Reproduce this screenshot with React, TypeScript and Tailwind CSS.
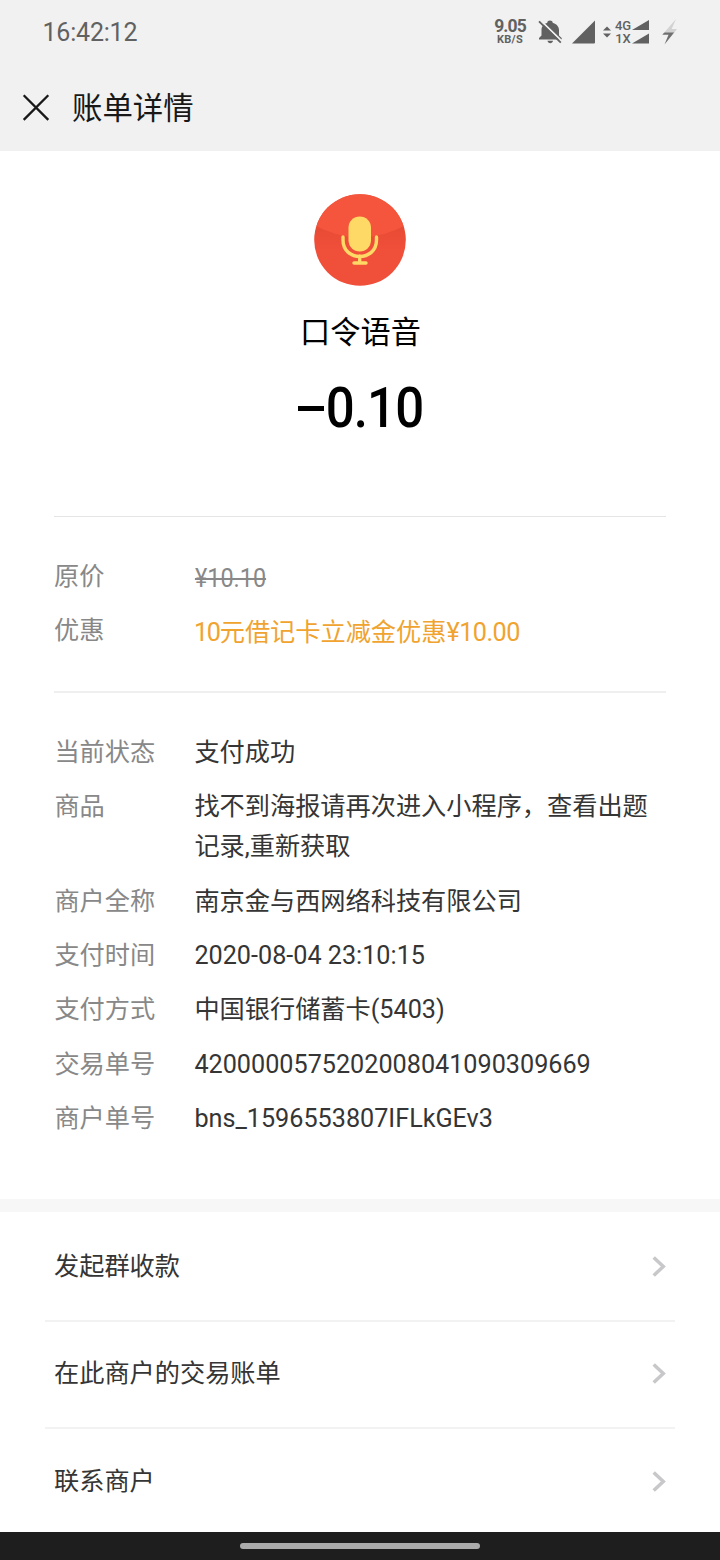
import type { ReactNode } from "react";

const details = [
  { label: "当前状态", value: "支付成功" },
  { label: "商品", value: "找不到海报请再次进入小程序，查看出题记录,重新获取" },
  { label: "商户全称", value: "南京金与西网络科技有限公司" },
  { label: "支付时间", value: "2020-08-04 23:10:15" },
  { label: "支付方式", value: "中国银行储蓄卡(5403)" },
  { label: "交易单号", value: "4200000575202008041090309669" },
  { label: "商户单号", value: "bns_1596553807IFLkGEv3" },
];

const actions = ["发起群收款", "在此商户的交易账单", "联系商户"];

function StatusBar() {
  return (
    <div className="flex h-16 items-center justify-between pr-[42px] pl-[42.5px] text-[#616161]">
      <span className="pt-0.5 text-[25px] leading-8 tracking-[-0.2px]">16:42:12</span>
      <div className="flex items-center">
        <div className="flex w-8 flex-col items-center font-bold">
          <span className="text-[17.5px] leading-[14px] tracking-[-0.9px]">9.05</span>
          <span className="text-[11px] leading-[13px] tracking-[0.3px]">KB/S</span>
        </div>
        <svg className="ml-3 h-6 w-6" viewBox="0 0 24 24" fill="currentColor">
          <path d="M1 19.500v-1.500l2.500-2.500V10c0-3.600 2.200-6.400 5.700-7.100C9.400-.2 14.600-.2 14.800 2.900 18.300 3.600 21 6.400 21 10v5.500l2.700 2.500v1.500z" />
          <path d="M9.500 20.800h5.500c-.3 3.200-5.200 3.200-5.500 0z" />
          <path d="M2-.2 24 21.300" stroke="#f1f1f1" strokeWidth="1.700" />
          <path d="M1 1.300 22.800 22.600" stroke="currentColor" strokeWidth="1.800" />
        </svg>
        <svg className="ml-[10px] h-6 w-6" viewBox="0 0 24 24" fill="currentColor">
          <path d="M0 23.500 23 .5v22q0 1-1 1z" />
        </svg>
        <svg className="ml-[7px] h-3 w-2" viewBox="0 0 8 12" fill="currentColor">
          <path d="M0 4.500 4 .5l4 4zM0 7.500h8l-4 4z" />
        </svg>
        <div className="ml-[3px] flex w-[18px] flex-col items-center text-[13px] leading-[13px] font-medium">
          <span>4G</span>
          <span>1X</span>
        </div>
        <svg className="h-6 w-[17px]" viewBox="0 0 17 24" fill="currentColor">
          <path d="M0 10 17 0v10zM0 23.500 17 13.500v10z" />
        </svg>
        <svg className="ml-[13px] h-[26px] w-4" viewBox="0 0 16 26">
          <defs>
            <linearGradient id="charge" x1="0" y1="0" x2="0" y2="1">
              <stop offset="0.500" stopColor="#d2d2d2" />
              <stop offset="0.560" stopColor="#707070" />
            </linearGradient>
          </defs>
          <path d="M14 0 .3 15.800H6.500L2.500 25.500 15 10H9.700z" fill="url(#charge)" />
        </svg>
      </div>
    </div>
  );
}

function Row({ label, children }: { label: string; children: ReactNode }) {
  return (
    <div className="flex">
      <span className="w-[140px] shrink-0 text-[#888]">{label}</span>
      <div className="w-[460px]">{children}</div>
    </div>
  );
}

export default function App() {
  return (
    <div className="flex h-[1560px] w-[720px] flex-col overflow-hidden bg-white font-['Roboto','Noto_Sans_CJK_SC',sans-serif] text-[25.2px] text-[#353535]">
      <header className="h-[151px] bg-[#f1f1f1]">
        <StatusBar />
        <div className="flex h-[87px] items-center pl-6 text-[#181818]">
          <svg className="h-6 w-6 overflow-visible" viewBox="0 0 24 24" fill="none" stroke="currentColor" strokeWidth="2.300">
            <path d="M-.3-.7 24.300 23.900M24.300-.7-.3 23.900" />
          </svg>
          <h1 className="ml-6 pt-0.5 text-[30.4px] leading-10 font-normal">账单详情</h1>
        </div>
      </header>

      <section className="flex h-[365px] flex-col items-center pt-[43px] text-black">
        <svg className="h-[92px] w-[92px]" viewBox="0 0 92 92">
          <defs>
            <clipPath id="badge">
              <circle cx="46" cy="46" r="45.800" />
            </clipPath>
            <linearGradient id="fold" x1="0" y1="0" x2="0" y2="1">
              <stop offset="0.320" stopColor="#e64a33" />
              <stop offset="0.600" stopColor="#f04f3a" />
            </linearGradient>
          </defs>
          <g clipPath="url(#badge)">
            <path d="M0 0h92v92H0z" fill="url(#fold)" />
            <path d="M0 0h92v31Q46 56 0 31z" fill="#f4553c" />
          </g>
          <rect x="34.500" y="22.500" width="22.500" height="35" rx="11.200" fill="#ffd966" />
          <path d="M29 43v3c0 22 33.500 22 33.500 0v-3M45.700 62v7M40 69h12" fill="none" stroke="#ffd966" strokeWidth="3.400" strokeLinecap="round" />
        </svg>
        <h2 className="mt-[26px] pl-px text-[30.2px] leading-[42px]">口令语音</h2>
        <div className="mt-6 flex h-[60px] items-center pl-[7px] text-[56px] leading-[60px] font-medium">
          <span className="-mr-[3px] h-[5px] w-[26px] bg-black" />
          <span className="origin-center scale-x-[0.91] tracking-[-1px]">0.10</span>
        </div>
      </section>

      <section className="mx-[54px] flex h-[175px] flex-col gap-[14px] border-t border-[#e5e5e5] pt-10 leading-[40.3px]">
        <Row label="原价">
          <span className="relative top-0.5 inline-block origin-left scale-x-[0.93] pl-px align-top text-[#888] line-through decoration-2">¥10.10</span>
        </Row>
        <Row label="优惠">
          <span className="relative top-0.5 text-[#f0a32f]">
            <span className="tracking-[-1.3px]">10</span>元借记卡立减金优惠<span className="tracking-[-0.5px]">¥10.00</span>
          </span>
        </Row>
      </section>

      <section className="mx-[54px] flex h-[508px] flex-col gap-[14.1px] border-t-2 border-[#efefef] pt-[39.5px] pl-[0.4px] leading-[40.3px]">
        {details.map((item) => (
          <Row key={item.label} label={item.label}>
            {item.value}
          </Row>
        ))}
      </section>

      <div className="h-[13px] shrink-0 bg-[#f7f7f7]" />

      <nav className="flex h-80 flex-col px-[45px] pt-0.5">
        {actions.map((action) => (
          <a key={action} className="flex h-[107.6px] shrink-0 items-center justify-between border-b-2 border-[#f2f2f2] pr-[9px] pl-[9px]">
            <span>{action}</span>
            <svg className="h-[22px] w-[14px]" viewBox="0 0 14 22" fill="none" stroke="#c8c8cb" strokeWidth="3.500">
              <path d="M1.700 1.500 11.300 10.500 1.700 19.500" />
            </svg>
          </a>
        ))}
      </nav>

      <footer className="flex h-7 shrink-0 items-center justify-center bg-[#1e1e1e]">
        <div className="h-1.5 w-60 rounded-full bg-[#ababab]" />
      </footer>
    </div>
  );
}
